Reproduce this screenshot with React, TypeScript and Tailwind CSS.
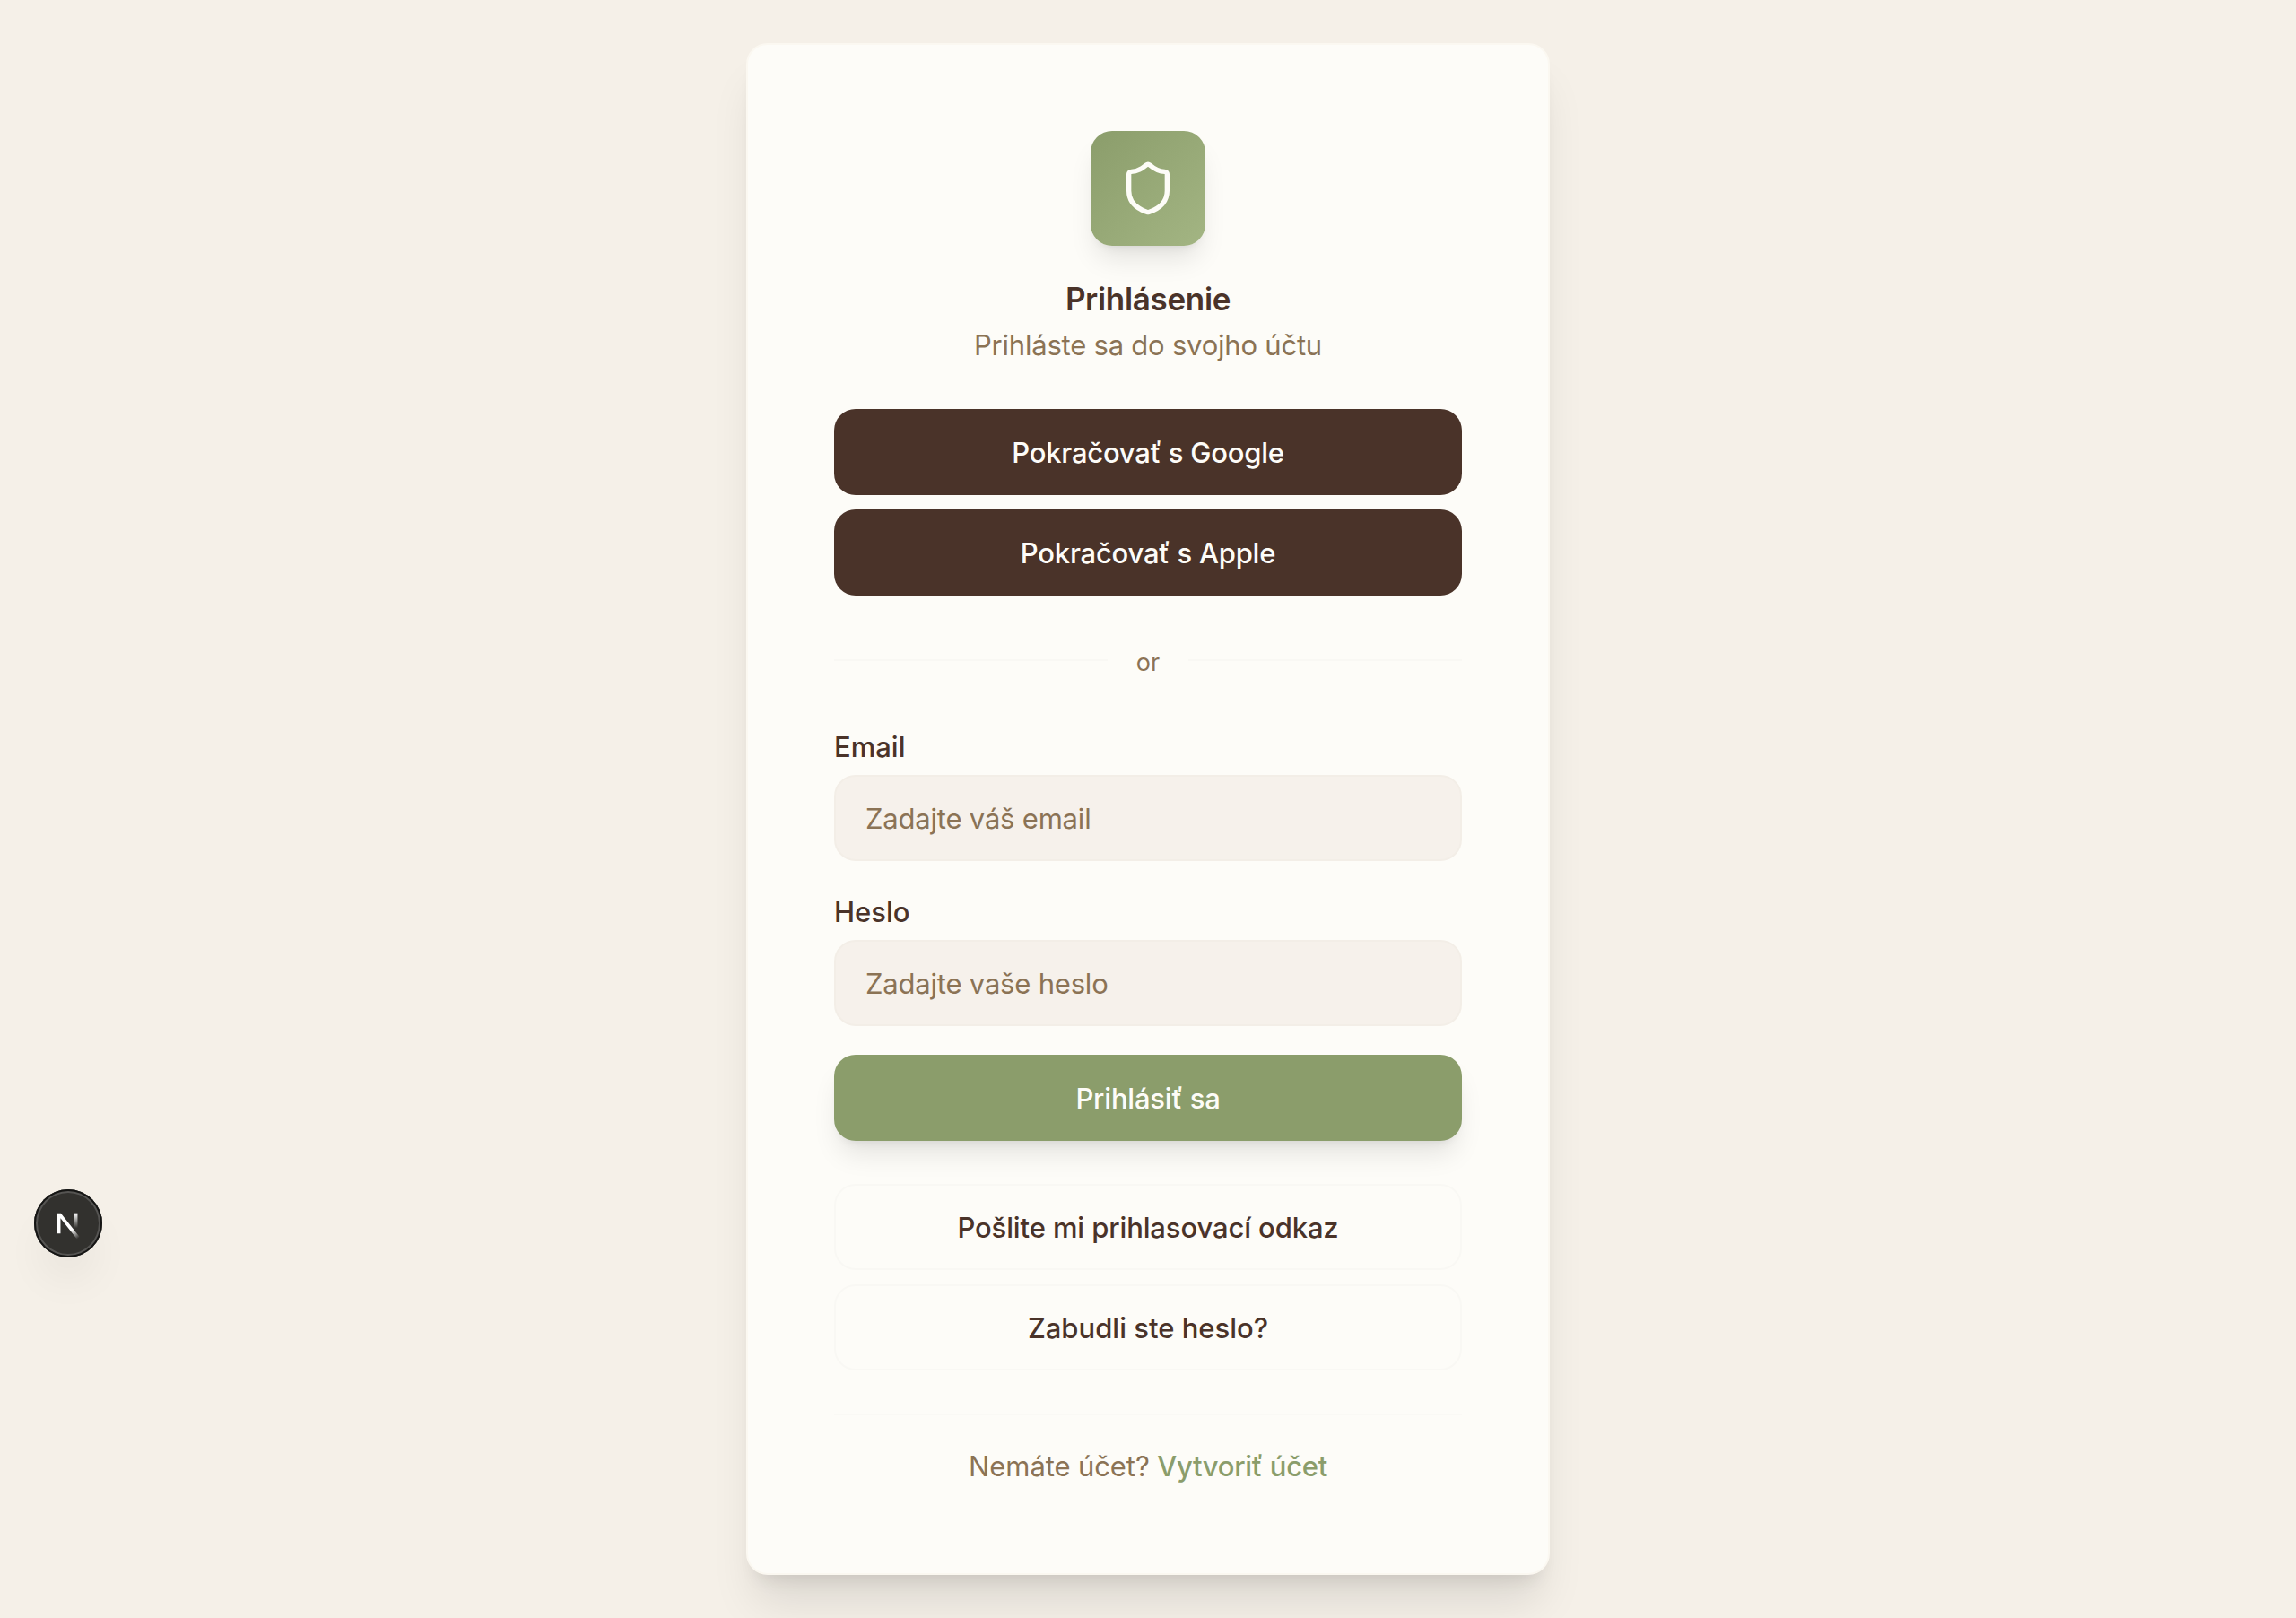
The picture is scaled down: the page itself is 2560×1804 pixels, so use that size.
import { Shield } from "lucide-react";

const PRIMARY_SHADOW =
  "shadow-[0_20px_30px_-6px_rgba(0,0,0,0.1),0_8px_12px_-8px_rgba(0,0,0,0.1)]";

function SocialButton({ label }: { label: string }) {
  return (
    <button className="flex h-24 w-full items-center justify-center rounded-3xl bg-[#4a3329] pt-0.5 font-medium text-[#fdfcf8]">
      <span className="tracking-[-0.22px]">{label}</span>
    </button>
  );
}

function OutlineButton({ label, tracking }: { label: string; tracking: string }) {
  return (
    <button className="flex h-24 w-full items-center justify-center rounded-3xl border-2 border-[#f9f8f4] pt-0.5 font-medium text-[#4a3329]">
      <span className={tracking}>{label}</span>
    </button>
  );
}

function Field({
  label,
  placeholder,
  type,
}: {
  label: string;
  placeholder: string;
  type: string;
}) {
  return (
    <label className="flex flex-col gap-[7px]">
      <span className="pt-px font-medium text-[#4a3329]">{label}</span>
      <input
        type={type}
        placeholder={placeholder}
        className="h-24 w-full rounded-3xl border-2 border-[#f3eee7] bg-[#f6f1eb] px-[33px] text-[31px] tracking-[-0.2px] outline-none placeholder:text-[#8b7355]"
      />
    </label>
  );
}

function DevBadge() {
  return (
    <div className="fixed top-[1326px] left-[38px] size-[76px] rounded-full bg-[#32312e] shadow-[inset_0_0_0_2px_#151514,inset_0_0_0_4px_#555452,0_32px_48px_-8px_rgba(0,0,0,0.06)]">
      <svg viewBox="1 1 38 38" className="size-[76px]" fill="none">
        <defs>
          <linearGradient id="diag" x1="22.4" y1="23.4" x2="26" y2="28" gradientUnits="userSpaceOnUse">
            <stop stopColor="white" />
            <stop offset="1" stopColor="white" stopOpacity="0" />
          </linearGradient>
          <linearGradient id="stem" x1="24.3" y1="14.4" x2="24.3" y2="22.6" gradientUnits="userSpaceOnUse">
            <stop stopColor="white" />
            <stop offset="1" stopColor="white" stopOpacity="0" />
          </linearGradient>
        </defs>
        <path d="M13.87 14.35 H15.95 L26.5 27.8 L25 28.9 L15.73 17.1 V25.6 H13.87 Z" fill="url(#diag)" />
        <path d="M24.3 14.35 V26" stroke="url(#stem)" strokeWidth="1.86" />
      </svg>
    </div>
  );
}

export default function App() {
  return (
    <div className="flex h-[1804px] justify-center overflow-hidden bg-[#f5f0e8] pt-12 font-['Inter',sans-serif] text-[31px] leading-[48px]">
      <main className="h-[1708px] w-[896px] rounded-3xl border-2 border-[#fbf8f1] bg-[#fdfcf8] p-24 shadow-[0_40px_50px_-10px_rgba(0,0,0,0.1),0_16px_20px_-12px_rgba(0,0,0,0.1)]">
        <header className="flex flex-col items-center">
          <div
            className={`mb-8 flex size-32 items-center justify-center rounded-3xl bg-linear-to-br from-[#8b9d6b] to-[#a3b583] ${PRIMARY_SHADOW}`}
          >
            <Shield className="size-16 text-[#fdfcf8]" />
          </div>
          <h1 className="text-[35px] leading-[54px] font-semibold tracking-[-0.33px] text-[#4a3329]">Prihlásenie</h1>
          <p className="pt-px tracking-[-0.22px] text-[#8b7355]">Prihláste sa do svojho účtu</p>
        </header>

        <div className="mt-[47px] flex flex-col gap-4">
          <SocialButton label="Pokračovať s Google" />
          <SocialButton label="Pokračovať s Apple" />
        </div>

        <div className="my-12 flex h-12 items-center gap-8">
          <div className="h-0.5 flex-1 bg-[#f9f8f4]" />
          <div className="pt-[3px] text-[#8b7355]">
            <span className="text-[27px]">or</span>
          </div>
          <div className="h-0.5 flex-1 bg-[#f9f8f4]" />
        </div>

        <form className="flex flex-col gap-8">
          <Field label="Email" type="email" placeholder="Zadajte váš email" />
          <Field label="Heslo" type="password" placeholder="Zadajte vaše heslo" />
          <button
            type="button"
            className={`flex h-24 w-full items-center justify-center rounded-3xl bg-[#8b9d6b] pt-0.5 font-medium tracking-[-0.2px] text-[#fdfcf8] ${PRIMARY_SHADOW}`}
          >
            Prihlásiť sa
          </button>
        </form>

        <div className="mt-12 flex flex-col gap-4">
          <OutlineButton label="Pošlite mi prihlasovací odkaz" tracking="tracking-[-0.12px]" />
          <OutlineButton label="Zabudli ste heslo?" tracking="tracking-normal" />
        </div>

        <footer className="mt-12 border-t-2 border-[#faf9f5] pt-[33px] text-center text-[#8b7355]">
          <span className="tracking-[-0.1px]">Nemáte účet? </span>
          <a className="font-medium tracking-[-0.3px] text-[#8b9d6b]">Vytvoriť účet</a>
        </footer>
      </main>
      <DevBadge />
    </div>
  );
}
